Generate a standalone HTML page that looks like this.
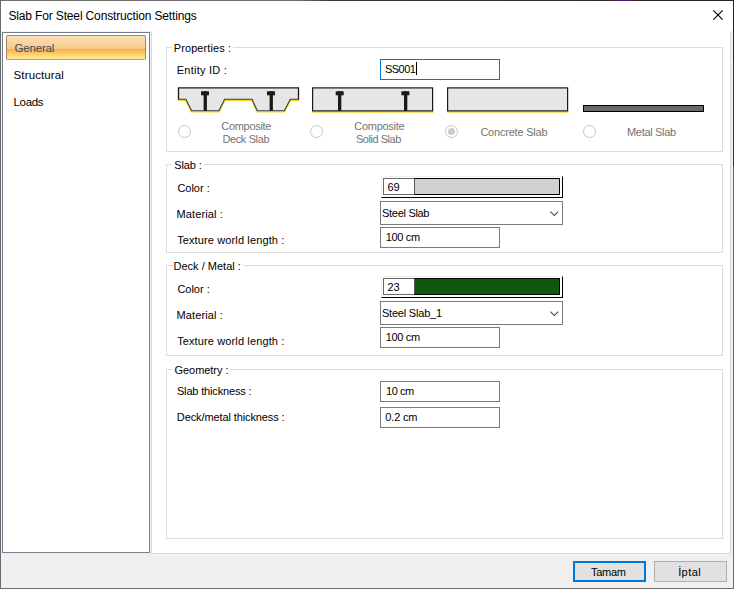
<!DOCTYPE html>
<html><head><meta charset="utf-8"><title>Slab For Steel Construction Settings</title>
<style>
html,body{margin:0;padding:0;}
body{width:734px;height:589px;overflow:hidden;background:#f0f0f0;position:relative;font-family:"Liberation Sans",sans-serif;color:#000;}
div,span{box-sizing:border-box;}
.abs{position:absolute;}
#win{position:absolute;left:0;top:0;width:734px;height:589px;background:#f0f0f0;}
#bt{position:absolute;left:0;top:0;width:734px;height:1px;background:linear-gradient(to right,#6e6e6e 0,#6e6e6e 300px,#3c383a 330px,#2e2a2c 612px,#4a1a6a 613px,#4a1a6a 634px,#2a2226 635px,#2a2226 734px);}
#bl{position:absolute;left:0;top:0;width:1px;height:589px;background:#6a6a6a;}
#br{position:absolute;left:733px;top:0;width:1px;height:589px;background:linear-gradient(to bottom,#2a2226 0,#2a2226 60px,#4a2e1e 61px,#4a2e1e 158px,#30333b 159px,#30333b 166px,#6a6a6a 167px,#6a6a6a 589px);}
#bb{position:absolute;left:0;top:588px;width:734px;height:1px;background:#6a6a6a;}
#title{position:absolute;left:1px;top:1px;width:732px;height:30px;background:#fff;}
.tt{position:absolute;font-size:11.5px;line-height:14px;white-space:nowrap;}
#side{position:absolute;left:2px;top:32px;width:148px;height:521px;background:#fff;border:1px solid #747e8c;}
#sel{position:absolute;left:6px;top:35px;width:140px;height:25px;border:1px solid #a3895c;border-radius:2px;
 background:linear-gradient(to bottom,#fce2c0 0%,#fbdab0 12%,#f9cf98 40%,#f8c684 55.5%,#f7b044 57.5%,#fac460 72%,#fde48c 93%,#fde690 100%);border-bottom-color:#b5a075;}
#panel{position:absolute;left:151px;top:31px;width:580px;height:523px;background:#fff;border:1px solid #dadada;border-top-color:#fff;}
.grp{position:absolute;left:166px;width:557px;border:1px solid #dcdcdc;}
.t{position:absolute;font-size:11px;line-height:13px;white-space:nowrap;}
.lg{background:#fff;}
.lgbg{position:absolute;background:#fff;height:3px;}
.dis{color:#747474;}
.edit{position:absolute;border:1px solid #7a7a7a;background:#fff;height:21px;width:120px;left:380px;}
.combo{position:absolute;border:1px solid #7a7a7a;background:#fff;height:24px;width:183px;left:380px;}
.radio{position:absolute;width:13px;height:13px;border:1px solid #c6c6c6;border-radius:50%;background:#fff;}
.cc{position:absolute;left:381px;width:182px;height:22px;border-right:1px solid #000;border-bottom:1px solid #000;border-left:1px solid #f0f0f0;border-top:1px solid #f0f0f0;background:#fff;}
.ccn{position:absolute;left:383px;width:32px;height:17px;border:1px solid #6a6a6a;border-right:none;background:#fff;}
.ccs{position:absolute;left:414px;width:146px;height:17px;border:1px solid #000;border-left-color:#555;}
.btn{position:absolute;top:561px;height:21px;width:73px;background:#e1e1e1;}
</style></head><body>
<div id="win">
<div id="title"></div>
<div class="tt" style="left:8.44px;top:9px;letter-spacing:-0.147px;font-size:12px;">Slab For Steel Construction Settings</div>
<svg class="abs" style="left:708px;top:5px" width="20" height="20" viewBox="708 5 20 20"><path d="M713.3 10.3 L722.7 19.7 M722.7 10.3 L713.3 19.7" stroke="#000" stroke-width="1.15" fill="none"/></svg>

<div id="side"></div>
<div id="sel"></div>
<div class="tt" style="left:14.50px;top:41px;letter-spacing:-0.171px;color:#3c4a5e;">General</div>
<div class="tt" style="left:13.58px;top:68px;letter-spacing:0.122px;">Structural</div>
<div class="tt" style="left:13.56px;top:95px;letter-spacing:-0.334px;">Loads</div>

<div id="panel"></div>

<!-- Properties -->
<div class="grp" style="top:47px;height:105px;"></div>
<div class="lgbg" style="left:172px;top:46px;width:61px;"></div>
<div class="t" style="left:173.71px;top:42px;letter-spacing:0.109px;">Properties :</div>
<div class="t" style="left:176.71px;top:64px;letter-spacing:0.244px;">Entity ID :</div>
<div class="edit" style="top:59px;border-color:#0078d7;"></div>
<div class="t" style="left:384.92px;top:63px;letter-spacing:-0.500px;">SS001</div>
<div class="abs" style="left:416px;top:62px;width:1px;height:13px;background:#000;"></div>

<svg class="abs" style="left:170px;top:82px" width="550" height="36" viewBox="170 82 550 36">
<g transform="translate(0,0.3)">
 <polygon points="178.5,87.5 298.5,87.5 298.5,99 290.3,99 284.3,110.5 257.3,110.5 252,99 224.6,99 218.9,110.5 191.6,110.5 185.9,99 178.5,99" fill="#e6e6e6"/>
 <polyline points="178.5,100 185.6,100 191.3,111.6 219.2,111.6 225,100 251.7,100 257,111.6 284.6,111.6 290.6,100 298.5,100" fill="none" stroke="#f5d920" stroke-width="1.4"/>
 <polyline points="178.5,99 185.9,99 191.6,110.5 218.9,110.5 224.6,99 252,99 257.3,110.5 284.3,110.5 290.3,99 298.5,99" fill="none" stroke="#3a3a3a" stroke-width="1.1"/>
 <polyline points="178.5,99.5 178.5,87.5 298.5,87.5 298.5,99.5" fill="none" stroke="#1a1a1a" stroke-width="1.3"/>
 <rect x="201" y="91" width="8" height="4" fill="#1a1a1a"/><rect x="203.6" y="91" width="3.3" height="19.5" fill="#1a1a1a"/>
 <rect x="267" y="91" width="8" height="4" fill="#1a1a1a"/><rect x="269.6" y="91" width="3.3" height="19.5" fill="#1a1a1a"/>
 <rect x="312" y="111" width="121.5" height="1.4" fill="#f5d920"/>
 <rect x="312.6" y="87.6" width="120" height="23" fill="#e6e6e6" stroke="#1a1a1a" stroke-width="1.2"/>
 <rect x="335.7" y="91" width="8" height="4" fill="#1a1a1a"/><rect x="338" y="91" width="3.3" height="19.5" fill="#1a1a1a"/>
 <rect x="401.4" y="91" width="8" height="4" fill="#1a1a1a"/><rect x="404" y="91" width="3.3" height="19.5" fill="#1a1a1a"/>
 <rect x="447" y="111" width="121.5" height="1.4" fill="#f5d920"/>
 <rect x="447.6" y="87.6" width="120" height="23" fill="#e6e6e6" stroke="#1a1a1a" stroke-width="1.2"/>
</g>
 <rect x="583.5" y="105.5" width="120" height="6" fill="#696969" stroke="#000" stroke-width="1"/>
</svg>

<div class="radio" style="left:178px;top:125px;"></div>
<div class="t dis" style="left:221.31px;top:120px;letter-spacing:-0.301px;">Composite</div>
<div class="t dis" style="left:222.46px;top:133px;letter-spacing:-0.381px;">Deck Slab</div>
<div class="radio" style="left:310px;top:125px;"></div>
<div class="t dis" style="left:354.27px;top:120px;letter-spacing:-0.282px;">Composite</div>
<div class="t dis" style="left:355.88px;top:133px;letter-spacing:-0.447px;">Solid Slab</div>
<div class="radio" style="left:445px;top:125px;"></div>
<div class="abs" style="left:448px;top:128px;width:7px;height:7px;border-radius:50%;background:#cccccc;"></div>
<div class="t dis" style="left:480.40px;top:126px;letter-spacing:-0.210px;">Concrete Slab</div>
<div class="radio" style="left:583px;top:125px;"></div>
<div class="t dis" style="left:627.04px;top:126px;letter-spacing:-0.320px;">Metal Slab</div>

<!-- Slab -->
<div class="grp" style="top:164px;height:89px;"></div>
<div class="lgbg" style="left:172px;top:163px;width:32px;"></div>
<div class="t" style="left:174.24px;top:159px;letter-spacing:-0.104px;">Slab :</div>
<div class="t" style="left:177.39px;top:182px;letter-spacing:-0.014px;">Color :</div>
<div class="cc" style="top:176px;"></div>
<div class="ccn" style="top:178px;"></div>
<div class="ccs" style="top:178px;background:#d1d1d1;"></div>
<div class="t" style="left:387.50px;top:181px;letter-spacing:-0.100px;">69</div>
<div class="t" style="left:176.60px;top:208px;letter-spacing:0.102px;">Material :</div>
<div class="combo" style="top:201px;"></div>
<div class="t" style="left:382.08px;top:207px;letter-spacing:-0.304px;">Steel Slab</div>
<svg class="abs" style="left:546px;top:208px" width="16" height="12" viewBox="546 208 16 12"><polyline points="550.4,211.6 554.3,215.5 558.2,211.6" fill="none" stroke="#404040" stroke-width="1.05"/></svg>
<div class="t" style="left:177.14px;top:234px;letter-spacing:0.126px;">Texture world length :</div>
<div class="edit" style="top:227px;"></div>
<div class="t" style="left:385.84px;top:231px;letter-spacing:-0.360px;">100 cm</div>

<!-- Deck / Metal -->
<div class="grp" style="top:265px;height:91px;"></div>
<div class="lgbg" style="left:172px;top:264px;width:71px;"></div>
<div class="t" style="left:173.50px;top:260px;letter-spacing:0.012px;">Deck / Metal :</div>
<div class="t" style="left:177.39px;top:283px;letter-spacing:-0.014px;">Color :</div>
<div class="cc" style="top:276px;"></div>
<div class="ccn" style="top:278px;"></div>
<div class="ccs" style="top:278px;background:#0e590e;"></div>
<div class="t" style="left:387.50px;top:281px;letter-spacing:-0.100px;">23</div>
<div class="t" style="left:176.60px;top:309px;letter-spacing:0.102px;">Material :</div>
<div class="combo" style="top:301px;"></div>
<div class="t" style="left:381.92px;top:307px;letter-spacing:-0.194px;">Steel Slab_1</div>
<svg class="abs" style="left:546px;top:308px" width="16" height="12" viewBox="546 208 16 12"><polyline points="550.4,211.6 554.3,215.5 558.2,211.6" fill="none" stroke="#404040" stroke-width="1.05"/></svg>
<div class="t" style="left:177.14px;top:335px;letter-spacing:0.126px;">Texture world length :</div>
<div class="edit" style="top:327px;"></div>
<div class="t" style="left:385.84px;top:331px;letter-spacing:-0.360px;">100 cm</div>

<!-- Geometry -->
<div class="grp" style="top:369px;height:170px;"></div>
<div class="lgbg" style="left:172px;top:368px;width:58px;"></div>
<div class="t" style="left:174.46px;top:364px;letter-spacing:-0.038px;">Geometry :</div>
<div class="t" style="left:176.92px;top:385px;letter-spacing:-0.155px;">Slab thickness :</div>
<div class="edit" style="top:381px;"></div>
<div class="t" style="left:386.00px;top:385px;letter-spacing:-0.420px;">10 cm</div>
<div class="t" style="left:176.84px;top:411px;letter-spacing:-0.107px;">Deck/metal thickness :</div>
<div class="edit" style="top:407px;"></div>
<div class="t" style="left:385.31px;top:411px;letter-spacing:-0.155px;">0.2 cm</div>

<!-- buttons -->
<div class="btn" style="left:573px;border:2px solid #0078d7;"></div>
<div class="t" style="left:591.05px;top:566px;letter-spacing:-0.276px;">Tamam</div>
<div class="btn" style="left:654px;border:1px solid #adadad;"></div>
<div class="t" style="left:678.14px;top:566px;letter-spacing:0.442px;">İptal</div>

<div id="bt"></div><div id="bl"></div><div id="br"></div><div id="bb"></div>
</div>
</body></html>
